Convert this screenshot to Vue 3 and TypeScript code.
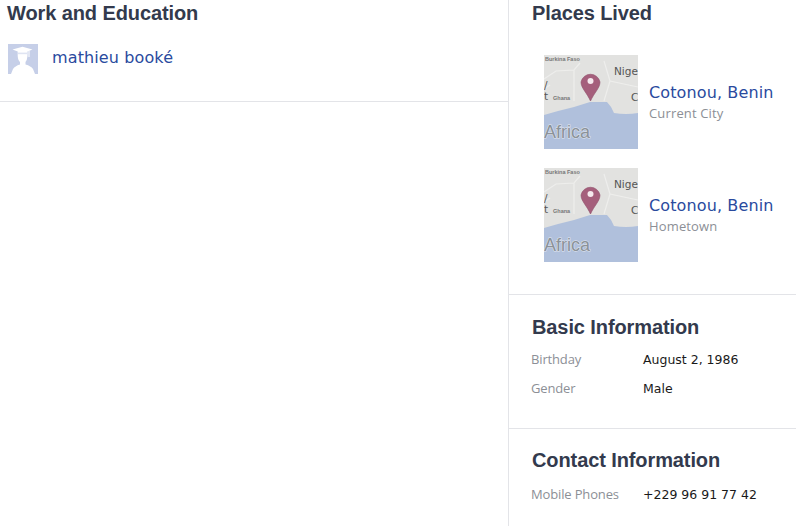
<script setup lang="ts">
interface Place { city: string; label: string }
interface Fact { label: string; value: string }
const places: Place[] = [
  { city: 'Cotonou, Benin', label: 'Current City' },
  { city: 'Cotonou, Benin', label: 'Hometown' },
]
const basics: Fact[] = [
  { label: 'Birthday', value: 'August 2, 1986' },
  { label: 'Gender', value: 'Male' },
]
const contacts: Fact[] = [{ label: 'Mobile Phones', value: '+229 96 91 77 42' }]
</script>

<template>
  <div class="page">
    <section class="left">
      <div class="work">
        <h2 class="title work-title">Work and Education</h2>
        <div class="school">
          <svg class="avatar" viewBox="0 0 30 30" width="30" height="30">
            <rect width="30" height="30" fill="#c6cfe8" />
            <path d="M4.5 5.5 L14.5 2.8 L24.5 5.5 L19.5 7.6 L19.5 12 Q19 16.5 17.5 18 L17.5 20.5 Q23 22 25 25 L27 30 L3 30 L5 25 Q7 22 12 20.5 L12 18 Q10 16.5 9.7 12 L9.7 7.6 Z" fill="#fff" />
            <rect x="10" y="8.6" width="9" height="1.6" fill="#dfe4f2" />
            <path d="M21 6.6 V13" stroke="#fff" stroke-width="1" fill="none" />
          </svg>
          <a class="school-name">mathieu booké</a>
        </div>
      </div>
    </section>
    <aside class="right">
      <div class="block places">
        <h2 class="title">Places Lived</h2>
        <div class="place-list">
          <div v-for="(p, i) in places" :key="i" class="place">
            <svg class="map" viewBox="0 0 94 94" width="94" height="94">
              <rect width="94" height="94" fill="#e2e2e0" />
              <path d="M0 24 L12 16 L30 15 L36 8 M30 15 L30 46 M0 34 L6 30 M60 6 L66 26 L94 32 M66 26 L60 46" fill="none" stroke="#eeeeec" stroke-width="1.2" />
              <path d="M0 60 L14 56 L30 52 L46 47 L63 47 Q68 52 70 58 Q82 60 94 58 L94 94 L0 94 Z" fill="#b0c0dc" />
              <text x="1" y="5.5" class="m-tiny">Burkina Faso</text>
              <text x="9" y="45" class="m-tiny">Ghana</text>
              <text x="70" y="20" class="m-mid">Nige</text>
              <text x="87" y="46" class="m-mid">C</text>
              <text x="0" y="34" class="m-mid">/</text>
              <text x="0" y="45" class="m-mid">t</text>
              <text x="0" y="83" class="m-big">Africa</text>
              <path d="M46.5 46 C43 38 37 33 37 27 A9.7 9.7 0 0 1 56 27 C56 33 50 38 46.5 46 Z" fill="#a55f7c" stroke="#8e4f6a" stroke-width=".6" />
              <circle cx="46.5" cy="26" r="3" fill="#f5e9ee" />
            </svg>
            <div class="place-text">
              <a class="city">{{ p.city }}</a>
              <div class="sub">{{ p.label }}</div>
            </div>
          </div>
        </div>
      </div>
      <div class="block basic">
        <h2 class="title">Basic Information</h2>
        <div v-for="f in basics" :key="f.label" class="fact">
          <span class="fact-label">{{ f.label }}</span>
          <span class="fact-value">{{ f.value }}</span>
        </div>
      </div>
      <div class="block contact">
        <h2 class="title">Contact Information</h2>
        <div v-for="f in contacts" :key="f.label" class="fact">
          <span class="fact-label">{{ f.label }}</span>
          <span class="fact-value">{{ f.value }}</span>
        </div>
      </div>
    </aside>
  </div>
</template>

<style>
html, body { margin: 0; background: #fff; overflow: hidden; }
</style>

<style scoped>
.page {
  display: flex;
  width: 796px;
  height: 526px;
  background: #fff;
  font-family: "DejaVu Sans", Verdana, sans-serif;
  overflow: hidden;
}
.left { width: 508px; flex: none; }
.work { height: 101px; border-bottom: 1px solid #e3e4e8; }
.right { flex: 1; border-left: 1px solid #e3e4e8; }
.title {
  margin: 0;
  font: bold 20px/24px "Liberation Sans", Arial, sans-serif;
  letter-spacing: -0.1px;
  color: #333a4d;
  padding-top: 1px;
}
.work-title { margin-left: 7px; }
.school { display: flex; align-items: center; gap: 14px; margin: 19px 0 0 8px; }
.avatar { display: block; flex: none; }
.school-name { font-size: 16px; letter-spacing: 0.12px; line-height: 26px; color: #2a4a9e; margin-top: -3px; }
.block { padding-left: 23px; border-bottom: 1px solid #e3e4e8; box-sizing: border-box; }
.block:last-child { border-bottom: 0; }
.places { height: 295px; }
.basic { height: 134px; padding-top: 19px; }
.contact { padding-top: 18px; }
.place-list { display: flex; flex-direction: column; gap: 19px; margin: 30px 0 0 12px; }
.place { display: flex; align-items: center; gap: 11px; }
.map { display: block; flex: none; }
.city { display: block; font-size: 16px; letter-spacing: 0.12px; line-height: 20px; color: #2a4a9e; white-space: nowrap; margin-top: -1px; }
.sub { font-family: "Open Sans", "DejaVu Sans", sans-serif; font-size: 13px; line-height: 16px; letter-spacing: 0.15px; color: #8c8f96; margin-top: 2px; }
.fact { display: flex; line-height: 29px; }
.basic .title { margin-bottom: 6px; }
.contact .title { margin-bottom: 8px; }
.fact-label {
  width: 111px;
  margin-left: -1px;
  margin-right: 1px;
  flex: none;
  font-family: "Open Sans", "DejaVu Sans", sans-serif;
  font-size: 13px;
  letter-spacing: -0.15px;
  color: #8c8f96;
}
.fact-value { font-size: 12.5px; color: #1a1a1a; white-space: nowrap; }
.m-tiny { font: bold 5.5px "Liberation Sans", sans-serif; fill: #777; }
.m-mid { font: 10.5px "DejaVu Sans", sans-serif; fill: #555; }
.m-big { font: 18px "Liberation Sans", sans-serif; fill: #8b9299; stroke: #e4e8f0; stroke-width: 1px; paint-order: stroke; }
</style>
